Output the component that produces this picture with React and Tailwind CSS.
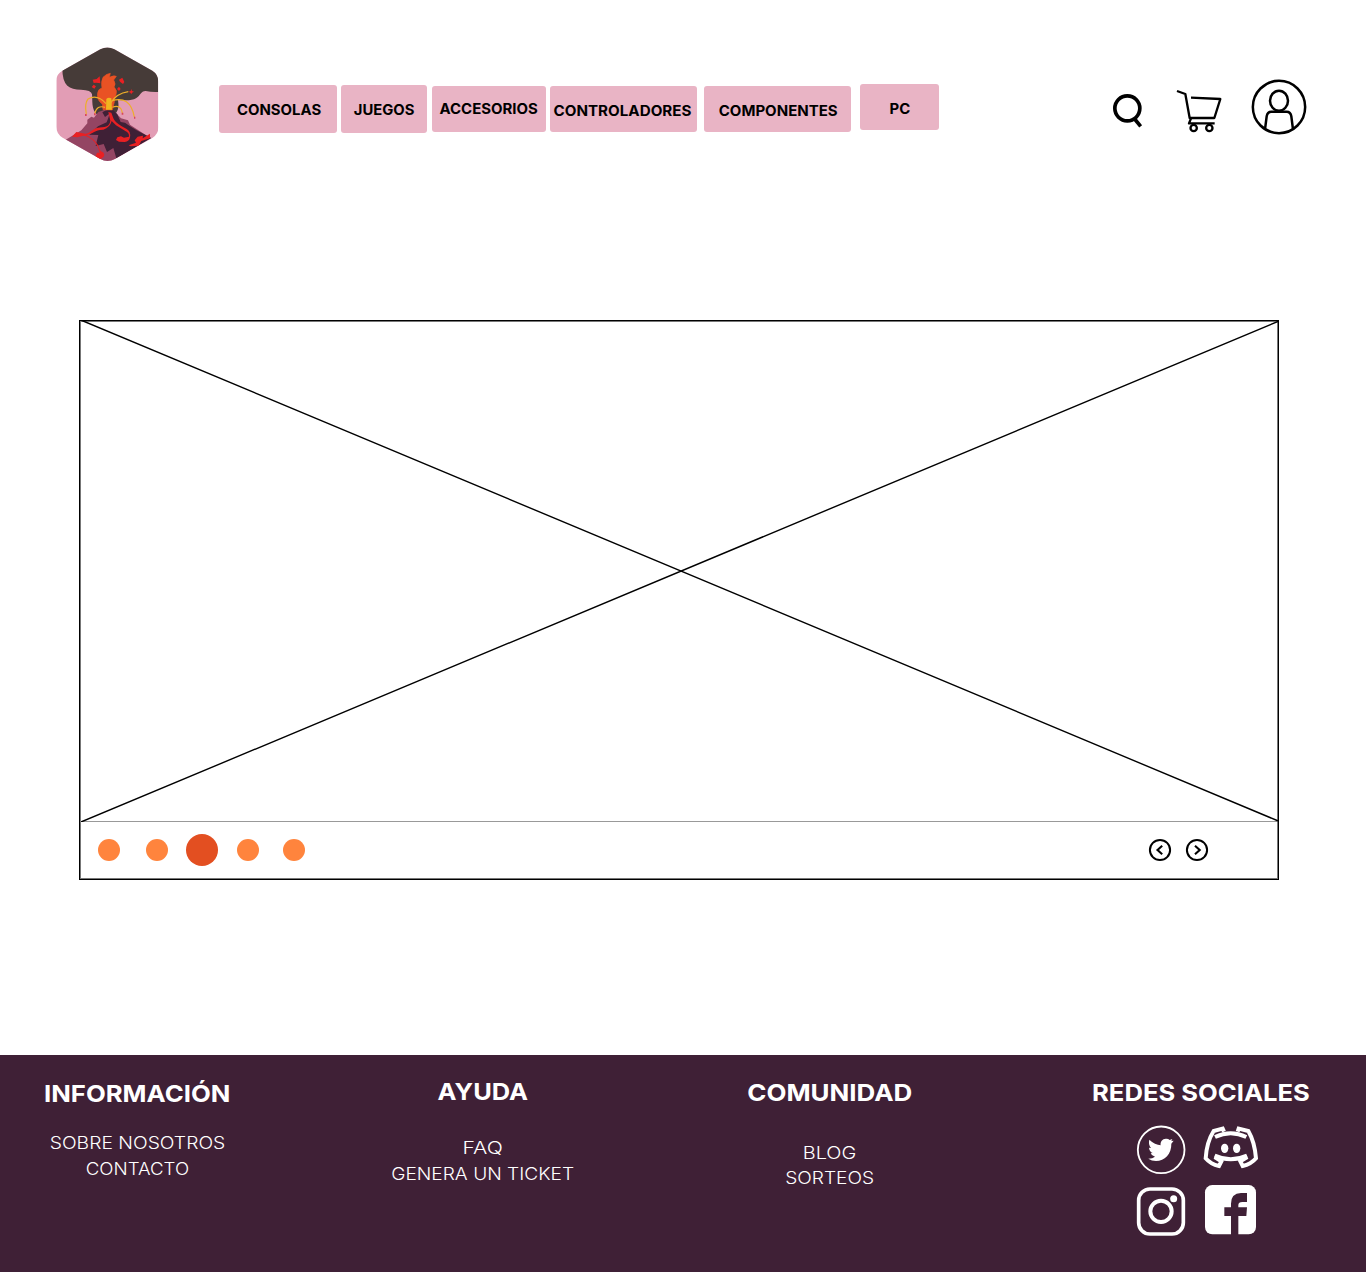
import React, { useLayoutEffect, useRef } from 'react';

// Text stretched horizontally so that it fills the given width.
function FitText({ width, className, children }) {
  const ref = useRef(null);
  useLayoutEffect(() => {
    const el = ref.current;
    el.style.transform = `scaleX(${width / el.offsetWidth})`;
  }, [width]);
  return (
    <span ref={ref} className={`inline-block shrink-0 whitespace-nowrap ${className || ''}`}>
      {children}
    </span>
  );
}

const NAV = [
  { label: 'CONSOLAS', w: 84, cls: 'w-[118px] h-[48px] mt-[84.7px] pt-[15.5px] pl-[1.5px]' },
  { label: 'JUEGOS', w: 60.5, cls: 'w-[85.5px] h-[48px] mt-[85.3px] ml-[4.4px] pt-[14.8px]' },
  { label: 'ACCESORIOS', w: 98, cls: 'w-[113.7px] h-[46.3px] mt-[85.5px] ml-[5.1px] pt-[13px]' },
  { label: 'CONTROLADORES', w: 138, cls: 'w-[147.3px] h-[46.3px] mt-[85.5px] ml-[4.3px] pt-[15px] pr-[2.5px]' },
  { label: 'COMPONENTES', w: 118.5, cls: 'w-[147.5px] h-[46.3px] mt-[85.5px] ml-[6.4px] pt-[15px] pl-px' },
  { label: 'PC', w: 21, cls: 'w-[79.5px] h-[45.5px] mt-[84px] ml-[8.5px] pt-[14.7px]' },
];

function Logo() {
  return (
    <svg className="ml-[47px] mt-[40px] h-[128px] w-[120px] shrink-0" viewBox="0 0 360 384">
      <defs>
        <clipPath id="hex">
          <path d="M160 28Q181 17 202 28L316 92Q334 103 334 125V262Q334 283 316 294L204 357Q181 369 160 357L47 293Q28 281 28 260V122Q28 102 46 92Z" />
        </clipPath>
      </defs>
      <g clipPath="url(#hex)">
        <path fill="#e29db5" d="M0 0H360V384H0Z" />
        <path fill="#463b38" d="M46 80Q45 123 61 137Q75 149 102 149Q133 150 135 163C137 178 132 211 151 224H202C219 210 214 190 213 180C232 181 255 183 267 175C280 168 281 153 296 153Q313 157 334 156V0H46Z" />
        <path fill="#944563" d="M55 300L103 271L121 250V239L133 230L141 233L154 216L178 208L205 217L222 235L243 241L249 254L310 294L181 372Z" />
        <path fill="#3f2036" d="M166 217Q179 205 199 211L211 223L221 246L234 248L247 257L269 271L313 294L208 355L199 324L180 336L170 312L146 318L154 285L127 284L153 259L179 247L189 220L174 231Z" />
        <path fill="#e92023" d="M184 216L193 218L199 235Q204 248 224 259L239 267Q252 274 249 292Q247 305 233 306L216 305L207 300L211 292L222 289L231 293L246 290Q247 278 235 273L207 256L194 243Q189 263 169 269C144 268 139 282 118 285Q142 297 153 315Q158 331 162 334Q176 340 170 350L158 359L145 351L150 338H158Q151 302 118 289L108 287L91 292L75 290L88 276L107 280C128 285 132 269 149 264C174 259 187 263 190 242Z" />
        <path fill="#e92023" d="M263 301L272 290L288 287L287 295L309 281V295L283 303L275 317L251 319L245 316L267 308Z" />
        <path fill="#e95224" stroke="#e95224" strokeWidth="2" d="M168 209L166 192C157 186 149 175 152 159Q153 147 165 144Q161 127 168 112Q178 101 190 100L187 112Q202 105 208 109L200 120Q208 133 201 141Q212 151 207 164Q201 179 202 186L196 210Z" />
        <path fill="#f0b51e" d="M178 177Q184 170 193 175L195 209H177Z" />
        <path fill="none" stroke="#edae2a" strokeWidth="3.5" d="M177 191Q151 161 123 177Q112 190 118 222M174 202Q150 194 143 221M190 190Q208 160 244 155M193 183Q249 164 262 231M196 202Q221 192 226 219" />
        <path fill="#e92023" d="M137 119L149 117L158 109L160 130L148 128L140 129ZM216 119L226 113L232 126L228 132L219 125ZM140 134L147 139L142 146L134 141ZM216 140L221 147L216 153L210 147ZM253 147L255 153L261 155L255 158L253 163L250 158L245 155L251 153Z" />
        <path fill="#d94859" d="M114 222h5v6h-5zM141 220h5v6h-5zM224 218h5v6h-5zM261 230h4v6h-4z" />
      </g>
    </svg>
  );
}

function Arrow({ d, cls }) {
  return (
    <button className={cls}>
      <svg className="h-6 w-6" viewBox="0 0 24 24" fill="none" stroke="#000">
        <circle cx="12" cy="12" r="10.1" strokeWidth="2" />
        <path d={d} strokeWidth="2.1" />
      </svg>
    </button>
  );
}

function Column({ title, width, links, cls, listCls }) {
  return (
    <section className={`flex h-[217px] shrink-0 flex-col items-center ${cls}`}>
      <h2 className="flex h-6 w-full justify-center text-[23.5px] leading-6 font-bold">
        <FitText width={width}>{title}</FitText>
      </h2>
      <ul className={`flex w-full flex-col items-center text-[17.5px] font-light ${listCls}`}>
        {links.map(([text, w]) => (
          <li key={text} className="flex h-[25.7px] justify-center leading-[25.7px]">
            <FitText width={w}>{text}</FitText>
          </li>
        ))}
      </ul>
    </section>
  );
}

export default function App() {
  return (
    <div className="h-[1278px] w-[1366px] overflow-hidden bg-white font-['Inter',sans-serif] text-black">
      <header className="flex h-[320px] items-start">
        <Logo />
        <nav className="ml-[52px] flex items-start">
          {NAV.map((n) => (
            <a key={n.label} className={`flex shrink-0 items-start justify-center rounded-[3px] bg-[#e9b4c5] text-[14.2px] leading-5 font-bold ${n.cls}`}>
              <FitText width={n.w}>{n.label}</FitText>
            </a>
          ))}
        </nav>
        <svg className="mt-[90px] ml-[170.8px] h-10 w-[35px] shrink-0" viewBox="30 60 105 120" fill="none" stroke="#000">
          <circle cx="82" cy="115" r="37.5" strokeWidth="11" />
          <path d="M104 147L122 169" strokeWidth="11" />
        </svg>
        <svg className="mt-[86px] ml-[30px] h-12 w-[50px] shrink-0" viewBox="225 48 150 144" fill="none" stroke="#000" strokeWidth="7" strokeLinejoin="round">
          <path d="M231 63L256 72L269 144H343L361 87L273 83" />
          <path d="M273 145L267 160H344" />
          <circle cx="281" cy="174" r="9.5" />
          <circle cx="328" cy="174" r="9.5" />
        </svg>
        <svg className="mt-[78px] ml-[25px] h-[58px] w-[58px] shrink-0" viewBox="450 24 174 174" fill="none" stroke="#000" strokeWidth="7.5">
          <circle cx="537" cy="111" r="78.5" />
          <ellipse cx="537" cy="92" rx="27" ry="30" />
          <path d="M495 178L500 139Q502 125 514 125H560Q572 125 574 139L579 178" />
        </svg>
      </header>

      <main className="mx-[79px] h-[560px] w-[1200px] border border-black shadow-[inset_0_0_0_1px_#777]">
        <svg className="block h-[501px] w-[1198px]" viewBox="80 321 1198 501" fill="none" stroke="#000" strokeWidth="1.4">
          <path d="M82 320.5L1279 821.3M81 822L1279 321" />
        </svg>
        <div className="-mt-px flex h-[56.5px] items-center border-t border-[#999]">
          <span className="ml-[18.3px] size-[22px] rounded-full bg-[#ff843d]" />
          <span className="ml-[25.9px] size-[22px] rounded-full bg-[#ff843d]" />
          <span className="ml-[17.7px] size-8 rounded-full bg-[#e34f21]" />
          <span className="ml-[19.3px] size-[22px] rounded-full bg-[#ff843d]" />
          <span className="ml-[23.6px] size-[22px] rounded-full bg-[#ff843d]" />
          <Arrow cls="ml-[843.2px]" d="M14.2 7.8L9.5 12L14.2 16.2" />
          <Arrow cls="ml-[13px]" d="M10 7.8L14.7 12L10 16.2" />
        </div>
      </main>

      <footer className="mt-[174.5px] flex h-[217.5px] items-start bg-[#3f2036] text-white">
        <Column title="INFORMACIÓN" width={186} cls="ml-[44px] w-[186px] pt-[27px]" listCls="mt-[24.7px]"
          links={[['SOBRE NOSOTROS', 175.5], ['CONTACTO', 103.5]]} />
        <Column title="AYUDA" width={91} cls="ml-[161.5px] w-[183px] pt-[25.5px]" listCls="mt-[31.3px]"
          links={[['FAQ', 40], ['GENERA UN TICKET', 182.5]]} />
        <Column title="COMUNIDAD" width={165.5} cls="ml-[172.5px] w-[166px] pt-[26px]" listCls="mt-[35.3px]"
          links={[['BLOG', 53.5], ['SORTEOS', 88.5]]} />
        <section className="ml-[178.5px] w-[219px] pt-[26px]">
          <h2 className="flex h-6 justify-center text-[23.5px] leading-6 font-bold">
            <FitText width={218}>REDES SOCIALES</FitText>
          </h2>
          <div className="mt-[20.5px] ml-[44px] flex items-start">
            <svg className="size-[50px]" viewBox="33 30 150 150">
              <circle cx="108.5" cy="104.5" r="70" fill="none" stroke="#fff" strokeWidth="5.5" />
              <path transform="translate(27 24)" fill="#fff" d="M46 50C56 60 70 66 80 67C78 56 86 46 97 47Q103 47 107 51L115 48L112 54L119 53L112 62C113 92 92 114 66 114Q53 114 43 107Q56 107 63 101Q53 99 50 91L56 90Q46 85 45 74L51 75Q42 65 46 50Z" />
            </svg>
            <svg className="ml-[17px] h-[45px] w-[56px]" viewBox="234 30 168 135" fill="none" stroke="#fff" strokeWidth="12">
              <path d="M270 66Q317 43 364 66M269 122Q317 144 366 122" />
              <path d="M297 50L293 41L266 48Q245 81 242 130Q257 148 282 153L289 139L269 126M338 50L341 41L370 48Q389 81 393 130Q378 148 353 153L346 139L367 126" />
              <ellipse cx="299" cy="100" rx="11" ry="14" fill="#fff" stroke="none" />
              <ellipse cx="335" cy="100" rx="11" ry="14" fill="#fff" stroke="none" />
            </svg>
          </div>
          <div className="mt-[9px] ml-[44px] flex items-start">
            <svg className="mt-[2px] size-[50px]" viewBox="33 213 150 150" fill="none" stroke="#fff">
              <rect x="41" y="222" width="134" height="135" rx="34" strokeWidth="11" />
              <circle cx="108" cy="289" r="32" strokeWidth="12" />
              <circle cx="146" cy="251" r="10.5" fill="#fff" stroke="none" />
            </svg>
            <svg className="ml-[18px] h-[52px] w-[53px]" viewBox="237 207 159 156">
              <rect x="240" y="210" width="153" height="148" rx="22" fill="#fff" />
              <path fill="#3f2036" d="M318 360V303H298V277H318V266Q318 235 348 234H366V261H352Q340 261 340 270V277H366L364 303H340V360Z" />
            </svg>
          </div>
        </section>
      </footer>
    </div>
  );
}
